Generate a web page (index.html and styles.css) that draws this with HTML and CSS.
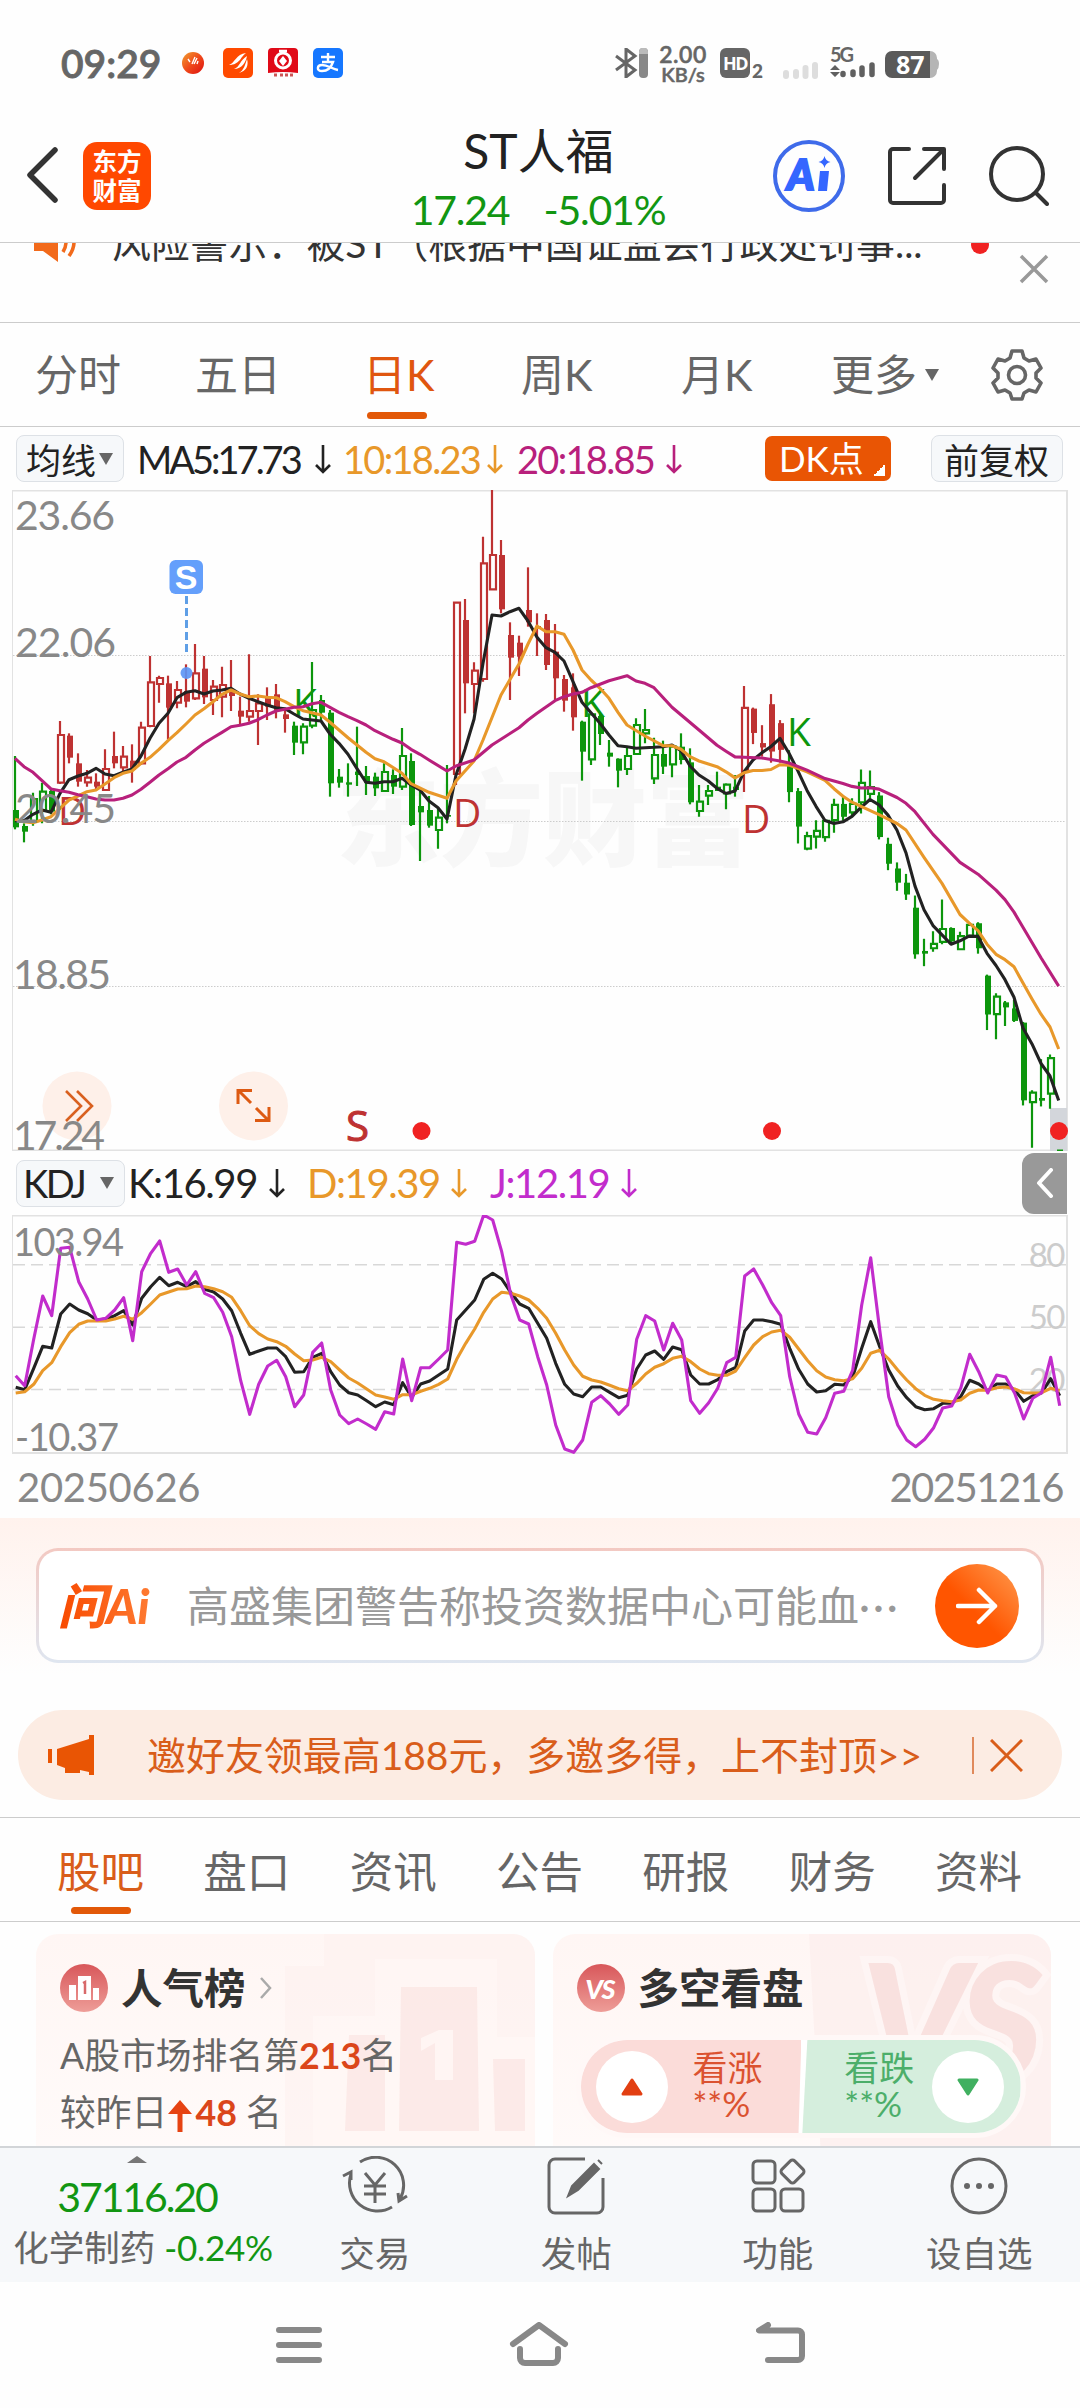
FILE: index.html
```
<!DOCTYPE html>
<html lang="zh-CN">
<head>
  <meta charset="UTF-8">
  <title>ST人福 17.24</title>
  <link rel="stylesheet" href="styles.css">
</head>
<body>

<div class="status">
  <span class="clock">09:29</span>
  <svg class="app-dot" width="22" height="22" viewBox="0 0 22 22">
    <defs><linearGradient id="ball" x1="0" y1="0" x2="1" y2="1"><stop offset="0" stop-color="#f0a030"/><stop offset=".5" stop-color="#f04a1a"/><stop offset="1" stop-color="#dd1010"/></linearGradient></defs>
    <circle cx="11" cy="11" r="11" fill="url(#ball)"/>
    <path d="M6 7l2 3M10 12l3-7M12 12l3-6M15 12l1-3" stroke="#fff" stroke-width="1.4" fill="none"/>
  </svg>
  <svg class="app-ico first" width="30" height="30" viewBox="0 0 30 30">
    <rect width="30" height="30" rx="5" fill="#ff4a00"/>
    <path d="M6 17c6-2 7-11 17-12-5 3-6 12-17 12zM11 21c6-2 6-9 13-13-1 6-5 13-13 13zM16 25c5-3 6-8 8-14 2 7-1 12-8 14z" fill="#fff"/>
  </svg>
  <svg class="app-ico" width="30" height="30" viewBox="0 0 30 30">
    <path d="M4 0h22a4 4 0 0 1 4 4v21q-15-2-30 0V4a4 4 0 0 1 4-4z" fill="#e00a18"/>
    <circle cx="15" cy="12.500" r="7.500" fill="none" stroke="#fff" stroke-width="3"/>
    <path d="M11 3h8M15 3v3" stroke="#fff" stroke-width="2.500"/><path d="M15 8l4 5-4 5-4-5z" fill="#fff"/>
    <path d="M6 27h3M12 27h3M17 27h3M22 27h3" stroke="#c55" stroke-width="3"/>
  </svg>
  <svg class="app-ico" width="30" height="30" viewBox="0 0 30 30">
    <rect width="30" height="30" rx="5" fill="#1677ff"/>
    <path d="M8 9h14M15 5v9M9 14h11c-2 6-6 9-11 9-6 0-5-6 0-6 6 0 10 4 16 5" fill="none" stroke="#fff" stroke-width="2.400"/>
  </svg>
  <svg class="bt" width="34" height="30" viewBox="0 0 34 30">
    <path d="M1 8l19 14-9 7V1l9 7L1 22" fill="none" stroke="#666" stroke-width="3"/>
    <rect x="24" width="9" height="30" rx="4" fill="#888"/><path d="M24 6V4a4 4 0 0 1 9 0v2z" fill="#bbb"/>
  </svg>
  <div class="speed"><span>2.00</span><span>KB/s</span></div>
  <div class="hd">HD</div><span class="hd-sub">2</span>
  <svg class="sig1" width="36" height="18" viewBox="0 0 36 18" stroke="#ddd" stroke-width="6" stroke-linecap="round">
    <path d="M3 12v3M13 11v4M22.500 7v8M32 4v11"/>
  </svg>
  <svg class="sig2" width="46" height="32" viewBox="0 0 46 32">
    <text x="0" y="15" class="g5" textLength="24">5G</text>
    <path d="M13 26.500v1M23 25v2.500M32 21v6.500M42 18v9.500" stroke="#606060" stroke-width="5.500" stroke-linecap="round"/>
    <path d="M0 23l5-5 5 5zM0 25l5 5 5-5z" fill="#606060"/>
  </svg>
  <svg class="battery" width="55" height="28" viewBox="0 0 55 28">
    <path d="M44 0h1a7 7 0 0 1 7 7v1q2 1 2 5t-2 6v1a7 7 0 0 1-7 7h-1z" fill="#b5b5b5"/>
    <path d="M7 0h38v27H7a7 7 0 0 1-7-7V7a7 7 0 0 1 7-7z" fill="#5a5a5a"/>
    <text x="11" y="22.500" class="pct">87</text>
  </svg>
</div>

<header class="header">
  <div class="left">
    <svg width="32" height="56" viewBox="0 0 32 56"><path d="M29 3L4 28l25 25" fill="none" stroke="#333" stroke-width="5.500" stroke-linecap="round" stroke-linejoin="round"/></svg>
    <div class="logo">东方<br>财富</div>
  </div>
  <div class="title">
    <h1>ST人福</h1>
    <div class="quote"><span>17.24</span><span>-5.01%</span></div>
  </div>
  <div class="right">
    <svg width="72" height="72" viewBox="0 0 72 72">
      <circle cx="36" cy="36" r="34" fill="none" stroke="#3f6bea" stroke-width="4"/>
      <text x="14" y="50" class="ai-text">A</text>
      <path d="M47 31h9l-2 20h-9z" fill="#3466ff"/>
      <path d="M51.500 16q1 5 6 6-5 1-6 6-1-5-6-6 5-1 6-6z" fill="#3466ff"/>
    </svg>
    <svg width="58" height="58" viewBox="0 0 58 58" fill="none" stroke="#333" stroke-width="4" stroke-linecap="round" stroke-linejoin="round">
      <path d="M21 2H5a3 3 0 0 0-3 3v48a3 3 0 0 0 3 3h48a3 3 0 0 0 3-3V38M36 2h20v20M54 4L27 31"/>
    </svg>
    <svg width="60" height="60" viewBox="0 0 60 60" fill="none" stroke="#333" stroke-width="4" stroke-linecap="round">
      <circle cx="28" cy="28" r="26"/><path d="M47 47l11 11"/>
    </svg>
  </div>
</header>

<div class="ticker">
  <svg class="horn" width="44" height="38" viewBox="0 0 44 38">
    <path d="M0 12h9L24 0v38L9 27H0z" fill="#f26a1b"/>
    <path d="M29 9q6 9 0 19M35 4q10 14 0 28" fill="none" stroke="#f26a1b" stroke-width="3.500"/>
  </svg>
  <span class="ticker-text">风险警示：被ST（根据中国证监会行政处罚事...</span>
  <i class="red-dot"></i>
  <svg class="close" width="30" height="30" viewBox="0 0 30 30"><path d="M2 2l26 26M28 2L2 28" stroke="#999" stroke-width="3.500"/></svg>
</div>

<nav class="periods">
  <span>分时</span><span>五日</span><span class="active">日K</span><span>周K</span><span>月K</span><span class="more">更多<i class="tri"></i></span>
  <svg width="52" height="52" viewBox="0 0 52 52" fill="none" stroke="#666" stroke-width="3.600" stroke-linejoin="round">
    <path d="M21 2h10l2 7 5 3 7-2 5 9-5 5v5l5 5-5 9-7-2-5 3-2 6H21l-2-6-5-3-7 2-5-9 5-5v-5l-5-5 5-9 7 2 5-3z"/>
    <circle cx="26" cy="26" r="8.500"/>
  </svg>
</nav>

<div class="ma-row">
  <span class="chip ma-chip">均线<i class="tri"></i></span>
  <span class="ma v5">MA5:17.73</span><svg class="down v5" viewBox="0 0 16 30"><path d="M8 1v27M1 21l7 7 7-7"/></svg>
  <span class="ma v10">10:18.23</span><svg class="down v10" viewBox="0 0 16 30"><path d="M8 1v27M1 21l7 7 7-7"/></svg>
  <span class="ma v20">20:18.85</span><svg class="down v20" viewBox="0 0 16 30"><path d="M8 1v27M1 21l7 7 7-7"/></svg>
  <span class="dk">DK点</span>
  <span class="chip fq">前复权</span>
</div>

<svg class="price" width="1080" height="661" viewBox="0 0 1080 661">
  <text x="336" y="368" class="watermark" textLength="414">东方财富</text>
  <g class="frame">
    <path d="M12 .5H1068M12 660.500H1068" stroke-width="2"/>
    <path d="M12.500 0V661" stroke-width="1"/><path d="M1067 0V661" stroke-width="2"/>
  </g>
  <path class="dots" d="M13 165.500H1066M13 331.500H1066M13 496.500H1066"/>
  <rect x="1050" y="618" width="17" height="43" fill="#d3d6db"/>
  <path d="M1057 660.500h6" stroke="#0c960c" stroke-width="2"/>
  <circle cx="77" cy="616" r="34.500" fill="#fef0e9"/>
  <path d="M66 601l15 15-15 15M77 601l15 15-15 15" fill="none" stroke="#d9601f" stroke-width="2.600"/>
  <circle cx="253.500" cy="616" r="34.500" fill="#fef0e9"/>
  <path d="M251 613l-12-12M238 614v-13.500h14M256 618l12 12M255 630.500h14V617" fill="none" stroke="#dd5a12" stroke-width="3"/>
  <g id="candles"></g>
  <g id="marks">
    <text x="58" y="335" class="mark red">D</text>
    <text x="453" y="337" class="mark red">D</text>
    <text x="742" y="343" class="mark red">D</text>
    <text x="293" y="227" class="mark green">K</text>
    <text x="581" y="227" class="mark green">K</text>
    <text x="787" y="256" class="mark green">K</text>
    <text x="346" y="651" class="mark red s">S</text>
  </g>
  <g id="averages"></g>
  <path d="M186.500 106v56" stroke="#5f9fe6" stroke-width="3" stroke-dasharray="8 4"/>
  <circle cx="186.500" cy="183" r="6" fill="#5b93f5" opacity=".9"/>
  <rect x="169.500" y="70" width="33.500" height="34" rx="6" fill="#649ffb"/>
  <text x="186" y="99" class="s-box">S</text>
  <g fill="#f02222"><circle cx="421.500" cy="641" r="9"/><circle cx="772" cy="641" r="9"/><circle cx="1059" cy="641" r="9"/></g>
  <g class="axis">
    <text x="15" y="39.500" textLength="100">23.66</text>
    <text x="15" y="167" textLength="101">22.06</text>
    <text x="15" y="332.500" textLength="101">20.45</text>
    <text x="13" y="498.500" textLength="98">18.85</text>
    <text x="13" y="659.500" textLength="92">17.24</text>
  </g>
</svg>

<div class="kdj-row">
  <span class="chip kdj-chip">KDJ<i class="tri"></i></span>
  <span class="kdj k">K:16.99</span><svg class="down v5" viewBox="0 0 16 30"><path d="M8 1v27M1 21l7 7 7-7"/></svg>
  <span class="kdj d">D:19.39</span><svg class="down v10" viewBox="0 0 16 30"><path d="M8 1v27M1 21l7 7 7-7"/></svg>
  <span class="kdj j">J:12.19</span><svg class="down vj" viewBox="0 0 16 30"><path d="M8 1v27M1 21l7 7 7-7"/></svg>
  <span class="collapse"><svg width="18" height="30" viewBox="0 0 18 30"><path d="M15 2L3 15l12 13" fill="none" stroke="#fff" stroke-width="4" stroke-linecap="round" stroke-linejoin="round"/></svg></span>
</div>

<svg class="kdj-chart" width="1080" height="239" viewBox="0 0 1080 239">
  <g class="frame">
    <path d="M12 .5H1068M12 238H1068" stroke-width="2"/>
    <path d="M12.500 0V239" stroke-width="1"/><path d="M1067 0V239" stroke-width="2"/>
  </g>
  <path class="dashes" d="M13 49.700H1066M13 112.300H1066M13 174.500H1066"/>
  <g class="level" text-anchor="end"><text x="1064" y="51.500">80</text><text x="1064" y="114">50</text><text x="1064" y="176.500">20</text></g>
  <g id="kdj"></g>
  <g class="axis small">
    <text x="13" y="41" textLength="111">103.94</text>
    <text x="15" y="236" textLength="104">-10.37</text>
  </g>
</svg>
<div class="dates"><span>20250626</span><span class="to">20251216</span></div>

<div class="ask">
  <div class="ask-box">
    <span class="ask-logo">问Ai</span>
    <span class="ask-text">高盛集团警告称投资数据中心可能血<span class="dots3">···</span></span>
    <span class="go"><svg width="42" height="38" viewBox="0 0 42 38"><path d="M2 19h37M23 3l16 16-16 16" fill="none" stroke="#fff" stroke-width="4.500" stroke-linecap="round" stroke-linejoin="round"/></svg></span>
  </div>
</div>

<div class="promo">
  <div class="promo-bar">
    <svg width="46" height="40" viewBox="0 0 46 40" fill="#e95504"><path d="M0 14h4v14H0zM9 14L41 4V0h5v40h-5v-3l-9-2v3H17v-5L9 30z"/></svg>
    <span class="promo-text">邀好友领最高188元，多邀多得，上不封顶&gt;&gt;</span>
    <i class="sep"></i>
    <svg class="x" width="33" height="33" viewBox="0 0 33 33"><path d="M1 1l31 31M32 1L1 32" stroke="#d95d1a" stroke-width="3"/></svg>
  </div>
</div>

<nav class="sections">
  <span class="active">股吧</span><span>盘口</span><span>资讯</span><span>公告</span><span>研报</span><span>财务</span><span>资料</span>
</nav>

<div class="cards">
  <div class="card rank">
    <svg class="card-bg" width="250" height="224" viewBox="0 0 250 224">
      <path d="M39 0h211v224H0V32h39z" fill="#fdf0ee" opacity=".5"/>
      <path d="M90 25h122v78h38v121H28V82h62z" fill="#fff8f7" opacity=".6"/>
      <path d="M116 53h76l2 144h-80zM64 101h36v96H60zM208 125h32v72h-30z" fill="#fae3e0" opacity=".65"/>
      <path d="M168 96v50h-18v-37l-14 8v-13l18-8z" fill="#fff5f3"/>
    </svg>
    <div class="card-head">
      <svg width="48" height="48" viewBox="0 0 48 48"><defs><linearGradient id="badge" x1="0" y1="0" x2="0" y2="1"><stop offset="0" stop-color="#d8575a"/><stop offset="1" stop-color="#ee9d98"/></linearGradient></defs><circle cx="24" cy="24" r="24" fill="url(#badge)"/><path d="M9 21h7v15H9zM18 12h13v24H18zM33 24h6v12h-6z" fill="#fff"/><path d="M23 19l2-1v12" stroke="#d8696a" stroke-width="2.500" fill="none"/></svg>
      <h2>人气榜</h2>
      <svg class="chev" width="14" height="24" viewBox="0 0 14 24"><path d="M2 2l9 10-9 10" fill="none" stroke="#aaa" stroke-width="2.500"/></svg>
    </div>
    <p>A股市场排名第<b>213</b>名</p>
    <p class="p2">较昨日<svg width="26" height="34" viewBox="0 0 26 34"><path d="M13 1L25 15H15.500V33h-5V15H1z" fill="#e64312"/></svg><b>48</b> 名</p>
  </div>
  <div class="card vs">
    <svg class="card-bg" width="250" height="224" viewBox="0 0 250 224">
      <path d="M8 0h242v224H20z" fill="#fdefed" opacity=".8"/>
      <text x="60" y="148" class="vs-bg">VS</text>
    </svg>
    <div class="card-head">
      <svg width="48" height="48" viewBox="0 0 48 48"><circle cx="24" cy="24" r="24" fill="url(#badge)"/><text x="23" y="35" class="vs-ico">VS</text></svg>
      <h2>多空看盘</h2>
    </div>
    <div class="vote">
      <div class="up"><i><svg width="22" height="18" viewBox="0 0 22 18"><path d="M11 2L20 16H2z" fill="#e23f12" stroke="#e23f12" stroke-width="3" stroke-linejoin="round"/></svg></i><span>看涨<br>**%</span></div>
      <div class="fall"><span>看跌<br>**%</span><i><svg width="22" height="18" viewBox="0 0 22 18"><path d="M11 16L20 2H2z" fill="#40b060" stroke="#40b060" stroke-width="3" stroke-linejoin="round"/></svg></i></div>
    </div>
  </div>
</div>

<div class="toolbar">
  <div class="index">
    <i class="caret"></i>
    <span class="num">37116.20</span>
    <span class="sector">化学制药 <em>-0.24%</em></span>
  </div>
  <div class="tool">
    <svg width="66" height="60" viewBox="0 0 66 60">
      <path d="M18 6A28 28 0 0 1 58 43M50 51A28 28 0 0 1 9 18M1 20l8-4v8M65 40l-8 5-1-8"/><path d="M23 17l10 12 10-12M33 29v18M22 30h22M22 38h22"/>
    </svg>交易
  </div>
  <div class="tool">
    <svg width="60" height="60" viewBox="0 0 60 60">
      <path d="M39 3H9a6 6 0 0 0-6 6v42a6 6 0 0 0 6 6h42a6 6 0 0 0 6-6V22"/><path d="M22 40l4-10L48 8l5 5-21 21zM52 4l4 4" fill="#666" stroke-width="2"/>
    </svg>发帖
  </div>
  <div class="tool">
    <svg width="60" height="60" viewBox="0 0 60 60">
      <rect x="5" y="5" width="22" height="22" rx="4"/><rect x="5" y="33" width="22" height="22" rx="4"/><rect x="33" y="33" width="22" height="22" rx="4"/><rect x="35.500" y="6.500" width="18" height="18" rx="3" transform="rotate(45 44.500 15.500)"/>
    </svg>功能
  </div>
  <div class="tool">
    <svg width="60" height="60" viewBox="0 0 60 60">
      <circle cx="30" cy="30" r="27"/><g fill="#666" stroke="none"><circle cx="18" cy="30" r="3"/><circle cx="30" cy="30" r="3"/><circle cx="42" cy="30" r="3"/></g>
    </svg>设自选
  </div>
</div>

<div class="sysnav">
  <svg width="46" height="46" viewBox="0 0 46 46"><path d="M3 8h40M3 23h40M3 38h40"/></svg>
  <svg width="60" height="46" viewBox="0 0 60 46"><path d="M4 22L30 3l26 19M11 27v9a5 5 0 0 0 5 5h28a5 5 0 0 0 5-5v-9"/></svg>
  <svg width="50" height="46" viewBox="0 0 50 46"><path d="M12 3L3 8.500h39a4 4 0 0 1 4 4V34a4 4 0 0 1-4 4H12"/></svg>
</div>

<script src="chart.js"></script>
</body>
</html>
```

FILE: styles.css
```
* {
  box-sizing: border-box;
}

body {
  margin: 0;
  width: 1080px;
  height: 2408px;
  overflow: hidden;
  background: #fefefe;
  color: #333;
  font-family: Lato, "Noto Sans CJK SC", sans-serif;
}

svg {
  display: block;
  flex-shrink: 0;
}

h1, h2, p {
  margin: 0;
  font-weight: normal;
}

/* status bar */
.status {
  display: flex;
  align-items: center;
  height: 96px;
  padding: 30px 0 0 61px;
  color: #666;
}

.clock {
  width: 121px;
  font-size: 39px;
  line-height: 40px;
  font-weight: 600;
  letter-spacing: 0;
  -webkit-text-stroke: 0.800px #666;
}

.app-ico {
  margin-left: 15px;
}

.app-ico.first {
  margin-left: 19px;
}

.bt {
  margin-left: 272px;
}

.speed {
  display: flex;
  flex-direction: column;
  align-items: center;
  width: 50px;
  margin: 1px 0 0 9px;
  font-size: 20px;
  line-height: 20px;
  font-weight: 600;
  -webkit-text-stroke: 0.500px #666;
}

.speed span:first-child {
  font-size: 23px;
  letter-spacing: 0.500px;
}

.hd {
  width: 30px;
  height: 30px;
  margin-left: 12px;
  border-radius: 6px;
  background: #666;
  color: #fff;
  text-align: center;
  font: bold 18px/30px "Open Sans", sans-serif;
  letter-spacing: -1.500px;
}

.hd-sub {
  width: 12px;
  margin: 16px 0 0 2px;
  font-size: 19px;
  line-height: 16px;
  font-weight: 900;
}

.sig1 {
  margin: 14px 0 0 19px;
}

.sig2 {
  margin-left: 11px;
}

.g5 {
  font-size: 20px;
  font-weight: bold;
  fill: #666;
}

.battery {
  margin: 3px 0 0 9px;
}

.pct {
  font: bold 25px "Open Sans", sans-serif;
  fill: #fff;
}

/* header */
.header {
  display: grid;
  grid-template-columns: 1fr auto 1fr;
  height: 147px;
  border-bottom: 1px solid #ccc;
}

.header .left {
  display: flex;
  align-items: flex-start;
  padding: 46px 0 0 26px;
}

.header .left svg {
  margin-top: 5px;
}

.logo {
  width: 68px;
  height: 68px;
  margin-left: 25px;
  padding-top: 4px;
  border-radius: 14px;
  background: #ff4800;
  color: #fff;
  text-align: center;
  font: bold 24.500px/29px "Noto Sans CJK SC", sans-serif;
}

.title {
  text-align: center;
}

.title h1 {
  margin: 28px 0 0 -3px;
  font-size: 48px;
  line-height: 54px;
  color: #222;
}

.quote {
  display: flex;
  justify-content: center;
  gap: 34px;
  margin: 9px 0 0 -4px;
  font-size: 41px;
  line-height: 46px;
  letter-spacing: -1.200px;
  color: #129612;
}

.header .right {
  display: flex;
  justify-content: flex-end;
  align-items: center;
  gap: 43px;
  padding: 13px 31px 0 0;
}

.ai-text {
  font: italic 900 42px Lato, sans-serif;
  fill: #3466ff;
  stroke: #3466ff;
  stroke-width: 2;
}

/* scrolling risk notice, halfway through its slide */
.ticker {
  display: flex;
  align-items: flex-start;
  height: 80px;
  overflow: hidden;
  border-bottom: 1px solid #ccc;
}

.horn {
  margin: -19px 0 0 34px;
}

.ticker-text {
  width: 838px;
  margin: -26px 0 0 34px;
  font-size: 38.900px;
  line-height: 52px;
  white-space: nowrap;
}

.red-dot {
  width: 18px;
  height: 18px;
  margin: -7px 0 0 21px;
  border-radius: 50%;
  background: #f02222;
}

.close {
  margin: 11px 0 0 30px;
}

/* period tabs */
.periods {
  display: flex;
  align-items: center;
  height: 104px;
  padding-left: 35px;
  border-bottom: 1px solid #ccc;
  font-size: 43px;
  line-height: 102px;
  color: #666;
}

.periods span {
  width: 160px;
  white-space: nowrap;
}

.periods .active {
  display: flex;
  flex-direction: column;
  width: 68px;
  margin: 0 90px 0 8px;
}

.periods span:nth-child(5) {
  width: 150px;
}

.periods .more {
  display: flex;
  align-items: center;
  width: 160px;
}

.active {
  color: #e0560f;
}

.active::after {
  content: "";
  width: 60px;
  height: 7px;
  margin: -14px 0 7px 4px;
  border-radius: 4px;
  background: #e25808;
}

.tri {
  width: 0;
  height: 0;
  border: 7.500px solid transparent;
  border-top: 12px solid #666;
  border-bottom: 0;
}

.more .tri {
  margin-left: 8px;
}

/* indicator rows */
.chip {
  display: flex;
  align-items: center;
  height: 47px;
  border: 1px solid #dde1e6;
  border-radius: 8px;
  background: #f6f8fa;
  color: #222;
  white-space: nowrap;
}

.ma-row,
.kdj-row {
  display: flex;
  align-items: center;
  height: 63px;
  padding-left: 16px;
  white-space: nowrap;
}

.ma-chip {
  width: 108px;
  padding-left: 9px;
  font-size: 35px;
}

.ma-chip .tri {
  margin-left: 3px;
}

.ma {
  font-size: 38px;
  letter-spacing: -1.700px;
}

.down {
  width: 16px;
  height: 30px;
  fill: none;
  stroke: currentColor;
  stroke-width: 2.600;
}

.v5 { color: #222; }
.v10 { color: #e8982a; }
.v20 { color: #b8207c; }
.vj { color: #c22ccc; }

.ma.v5 { width: 178px; margin-left: 13px; letter-spacing: -3px; }
.ma.v10 { width: 144px; margin-left: 12px; }
.ma.v20 { width: 149px; margin-left: 14px; }

.dk {
  width: 126px;
  height: 45px;
  margin-left: 83px;
  padding-left: 14px;
  border-radius: 7px;
  background: linear-gradient(135deg, transparent 50%, #fff 50%) 108px 28px / 12px 12px no-repeat, #e95504;
  color: #fff;
  font-size: 35px;
  line-height: 44px;
}

.fq {
  width: 132px;
  margin-left: 40px;
  padding-left: 12px;
  font-size: 35px;
}

.kdj-row {
  height: 64px;
}

.kdj-chip {
  width: 109px;
  padding-left: 6px;
  font-size: 38px;
  letter-spacing: -2.500px;
}

.kdj-chip .tri {
  margin-left: 16px;
}

.kdj {
  font-size: 40px;
  letter-spacing: -1.400px;
}

.kdj.k { width: 141px; margin-left: 3px; color: #222; }
.kdj.d { width: 144px; margin-left: 22px; color: #e8982a; }
.kdj.j { width: 131px; margin-left: 23px; color: #c22ccc; }

.collapse {
  display: flex;
  align-items: center;
  justify-content: center;
  width: 45px;
  height: 61px;
  margin-left: 385px;
  border-radius: 12px 0 0 12px;
  background: #999;
}

/* charts */
.frame {
  fill: none;
  stroke: #e2e2e2;
}

.dots {
  fill: none;
  stroke: #ccc;
  stroke-dasharray: 1.500 1.500;
}

.dashes {
  fill: none;
  stroke: #d8d8d8;
  stroke-width: 1.500;
  stroke-dasharray: 12 6;
}

.axis {
  font-size: 41px;
  fill: #888;
}

.axis.small {
  font-size: 38px;
}

.level {
  font-size: 33px;
  letter-spacing: -1.500px;
  fill: #ccc;
}

.watermark {
  font: 900 104px "Noto Sans CJK SC", sans-serif;
  fill: #f7f7f7;
}

.mark {
  font: 39px "Open Sans", sans-serif;
}

.mark.s {
  font-size: 42px;
  stroke: #be3232;
}

.red { fill: #be3232; }
.green { fill: #0c960c; }

.s-box {
  font: bold 34px "Liberation Sans", sans-serif;
  fill: #fff;
  text-anchor: middle;
}

.line {
  fill: none;
  stroke: currentColor;
  stroke-width: 3.100;
  stroke-linejoin: round;
}

.dates {
  display: flex;
  justify-content: space-between;
  height: 64px;
  padding: 0 17px;
  font-size: 40px;
  line-height: 66px;
  letter-spacing: -0.300px;
  color: #888;
}

.dates .to {
  letter-spacing: -1.500px;
}

/* ask AI */
.ask {
  height: 174px;
  padding: 30px 36px 0;
  background: linear-gradient(#fff2ed, #fefefe 90%);
}

.ask-box {
  display: flex;
  align-items: center;
  height: 115px;
  padding-left: 19px;
  border: 3px solid transparent;
  border-radius: 22px;
  background: linear-gradient(#fff, #fff) padding-box, linear-gradient(#f3c9c2, #dfe6f0) border-box;
}

.ask-logo {
  width: 129px;
  font: italic 900 48px/56px Lato, "Noto Sans CJK SC", sans-serif;
  letter-spacing: 0;
  background: linear-gradient(90deg, #f84a00, #ff8038) 0 0 / 104px 100% no-repeat;
  background-clip: text;
  -webkit-background-clip: text;
  color: transparent;
}

.ask-text {
  display: flex;
  width: 748px;
  font-size: 42px;
  line-height: 60px;
  white-space: nowrap;
  color: #999;
}

.dots3 {
  letter-spacing: 3px;
}

.go {
  display: flex;
  align-items: center;
  justify-content: center;
  width: 84px;
  height: 84px;
  border-radius: 50%;
  background: linear-gradient(45deg, #ff5500 45%, #ff9c50);
}

.promo {
  height: 126px;
  padding: 18px 18px 0;
  border-bottom: 1px solid #ccc;
}

.promo-bar {
  display: flex;
  align-items: center;
  height: 90px;
  padding-left: 30px;
  border-radius: 45px;
  background: #fcece3;
}

.promo-text {
  width: 825px;
  margin: -4px 0 0 53px;
  font-size: 39px;
  letter-spacing: -0.050px;
  white-space: nowrap;
  color: #d95d1a;
}

.sep {
  width: 2px;
  height: 37px;
  background: #e08a5c;
}

.promo .x {
  margin-left: 16px;
}

.sections {
  display: flex;
  justify-content: space-between;
  height: 104px;
  padding: 0 58px 0 57px;
  border-bottom: 1px solid #ccc;
  font-size: 43.500px;
  line-height: 106px;
  color: #666;
}

.sections .active {
  display: flex;
  flex-direction: column;
  color: #d95d1a;
}

.sections .active::after {
  margin: -17px auto 0;
}

/* cards */
.cards {
  display: flex;
  gap: 18px;
  height: 224px;
  padding: 12px 29px 0 36px;
  overflow: hidden;
}

.card {
  position: relative;
  flex: 1;
  height: 260px;
  padding: 30px 24px;
  overflow: hidden;
  border-radius: 22px;
  background: linear-gradient(#fff6f4, #fffbfa);
}

.card-bg {
  position: absolute;
  top: 0;
  right: 0;
}

.card-head {
  position: relative;
  display: flex;
  align-items: center;
  height: 48px;
}

.card h2 {
  margin-left: 13px;
  font-size: 41.500px;
  font-weight: 600;
  line-height: 50px;
  color: #333;
}

.chev {
  margin-left: 13px;
}

.card p {
  position: relative;
  display: flex;
  align-items: center;
  margin-top: 17px;
  font-size: 35.800px;
  line-height: 54px;
  white-space: pre;
  color: #666;
}

.card .p2 {
  margin-top: 3px;
}

.p2 svg {
  margin: 6px 0 0 0;
}

.p2 b {
  margin-left: 2px;
}

.card p b {
  color: #db461a;
}

.vs-bg {
  font: italic 900 164px Lato, sans-serif;
  letter-spacing: -8px;
  fill: #f9e1df;
  stroke: #fef5f4;
  stroke-width: 14;
  paint-order: stroke;
}

.vs-ico {
  font: italic 900 27px Lato, sans-serif;
  letter-spacing: -1px;
  fill: #fff;
  text-anchor: middle;
}

.vote {
  position: relative;
  display: flex;
  width: 450px;
  margin: 23px 0 0 -1px;
  border: 5px solid #fff8f7;
  border-radius: 52px;
  overflow: hidden;
  font-size: 35px;
  line-height: 36px;
  background: #fff;
}

.vote div {
  display: flex;
  align-items: center;
  height: 93px;
}

.vote i {
  display: flex;
  align-items: center;
  justify-content: center;
  width: 72px;
  height: 72px;
  border-radius: 50%;
  background: #fff;
}

.vote span {
  margin-top: -3px;
}

.up {
  width: 223px;
  padding-left: 15px;
  background: #fbdcd9;
  color: #db5230;
  clip-path: polygon(0 0, 100% 0, 218px 100%, 0 100%);
}

.up span { margin-left: 25px; }

.fall {
  width: 220px;
  margin-left: 1px;
  padding-left: 42px;
  background: #d5eedd;
  color: #4cae6a;
  clip-path: polygon(5px 0, 100% 0, 100% 100%, 0 100%);
}

.fall i { margin-left: 18px; }

/* bottom toolbar */
.toolbar {
  display: flex;
  height: 136px;
  border-top: 2px solid #d2d5d8;
  background: #f6f8fa;
  color: #666;
}

.index {
  display: flex;
  flex-direction: column;
  align-items: center;
  width: 274px;
}

.caret {
  border: 10px solid transparent;
  border-top: 0;
  border-bottom: 7px solid #777;
  margin-top: 8px;
}

.num {
  margin-top: 11px;
  font-size: 41px;
  line-height: 46px;
  letter-spacing: -2.100px;
  color: #129612;
}

.sector {
  margin: 5px 0 0 12px;
  font-size: 35.500px;
  line-height: 44px;
  white-space: nowrap;
}

.sector em {
  font-style: normal;
  font-size: 35px;
  letter-spacing: -0.300px;
  color: #129612;
}

.tool {
  display: flex;
  flex-direction: column;
  align-items: center;
  width: 201.500px;
  padding-top: 8px;
  font-size: 35.500px;
  line-height: 76px;
}

.tool svg {
  fill: none;
  stroke: #666;
  stroke-width: 3;
}

.sysnav {
  display: flex;
  justify-content: center;
  gap: 187px;
  padding: 40px 0 0 2px;
}

.sysnav svg {
  fill: none;
  stroke: #888;
  stroke-width: 6;
  stroke-linecap: round;
  stroke-linejoin: round;
}
```

FILE: chart.js
```
const NS = "http://www.w3.org/2000/svg";
const STEP = 9;
const X0 = 15;

// high, body top, body bottom, low, kind
// R/G = hollow, r/g = filled
const parts = [
  { y: -10, k: 1 / 3, rows: [
    [828,990,1042,1048,"g"],[1030,1038,1055,1087,"g"],[938,957,1025,1037,"G"],[908,935,990,1030,"G"],
    [925,933,995,1003,"g"],[723,765,908,912,"R"],[760,767,833,850,"r"],[820,850,905,920,"r"],
    [870,893,907,920,"R"],[880,905,920,933,"r"],[808,867,930,932,"R"],[755,828,850,865,"r"],
    [798,830,862,880,"R"],[793,842,870,908,"r"],[725,743,850,855,"R"],[528,607,738,742,"R"],
    [587,594,612,668,"R"],[587,610,683,778,"r"],[603,630,668,685,"R"],[553,633,665,682,"r"],
    [492,580,655,660,"R"],[528,566,652,672,"r"],[600,620,660,705,"R"],[560,615,650,712,"R"],
    [540,630,648,693,"r"],[650,692,710,735,"r"],[523,693,710,725,"R"],[643,670,693,795,"R"],
    [622,650,680,720,"r"],[612,643,690,715,"r"],[690,703,717,758,"r"],[725,737,788,825,"g"],
    [730,740,787,823,"G"],[546,690,737,745,"G"],[645,660,698,720,"g"],[690,698,910,950,"g"],
    [867,890,908,923,"g"],[850,907,914,950,"g"],[740,875,885,918,"g"],[858,888,908,945,"g"],
    [878,890,925,948,"g"],[850,876,933,935,"G"],[868,885,920,942,"g"],[744,828,920,930,"G"],
    [820,843,1035,1038,"g"],[930,978,997,1143,"g"],[948,990,1037,1043,"g"],[985,1013,1050,1106,"G"],
    [855,1005,1010,1030,"g"],[366,368,882,915,"R"],[357,420,610,700,"r"],[547,572,612,700,"R"],
    [170,250,597,605,"R"],[30,225,328,330,"R"],[180,225,388,400,"r"],[427,465,533,660,"r"],
    [467,488,530,588,"r"],[262,390,427,440,"r"],[400,438,444,528,"r"],[402,420,555,570,"r"],
    [432,515,595,660,"r"],[585,597,662,695,"r"],[580,622,712,752,"r"],[722,725,815,902,"g"],
    [700,703,838,855,"G"],[700,708,762,795,"g"],[780,818,830,860,"g"],[835,836,872,922,"g"],
    [798,828,867,885,"G"],[715,735,822,825,"G"],[687,750,760,790,"G"],[773,825,895,912,"G"],
    [782,822,860,882,"g"],[795,800,853,892,"G"],[760,800,840,853,"g"],[805,847,967,973,"g"],
    [915,965,993,1010,"G"],[915,933,947,975,"G"],[875,920,933,933,"g"],[910,914,940,988,"G"],
    [885,920,930,950,"g"]
  ]},
  { y: 150, k: 0.338, rows: [
    [136,201,390,450,"R"],[200,203,275,308,"r"],[252,305,318,345,"r"],[160,190,330,363,"r"],
    [237,246,325,363,"r"],[326,365,450,480,"g"],[438,447,552,602,"g"],[567,580,617,622,"G"],
    [533,565,582,617,"G"],[530,535,583,597,"G"],[470,488,533,570,"G"],[460,485,523,535,"g"],
    [468,485,510,520,"G"],[383,423,480,513,"G"],[386,435,455,470,"G"],[450,460,583,590,"g"],
    [585,603,662,681,"g"],[658,676,718,742,"g"],[692,718,753,769,"g"],[756,792,930,943,"g"],
    [884,920,928,965,"g"],[862,899,912,922,"G"],[768,855,893,900,"G"],[850,852,892,900,"g"],
    [863,876,915,917,"G"],[840,843,875,880,"G"],[835,838,912,928,"g"],[990,993,1108,1154,"g"],
    [1045,1055,1107,1181,"G"],[1068,1072,1087,1142,"g"],[1065,1090,1127,1130,"g"],[1130,1132,1362,1377,"g"],
    [1332,1339,1367,1502,"G"],[1240,1355,1363,1380,"g"],[1226,1237,1342,1387,"G"]
  ]}
];

function add(parent, name, attrs) {
  const el = document.createElementNS(NS, name);
  for (const key in attrs) el.setAttribute(key, attrs[key]);
  document.getElementById(parent).appendChild(el);
}

let i = 0;
parts.forEach(part => {
  part.rows.forEach(([high, top, bottom, low, kind]) => {
    const y = v => part.y + v * part.k;
    const x = X0 + STEP * i++;
    const color = kind.toLowerCase() === "r" ? "#be3232" : "#0c960c";
    if (kind === "R" || kind === "G") {
      add("candles", "path", {
        d: `M${x} ${y(high)}V${y(top)}M${x} ${y(bottom)}V${y(low)}M${x - 2} ${y(top)}h6V${y(bottom)}h-6z`,
        fill: "none", stroke: color, "stroke-width": 2.2
      });
    } else {
      add("candles", "path", { d: `M${x} ${y(high)}V${y(low)}`, stroke: color, "stroke-width": 2.2 });
      add("candles", "rect", { x: x - 2, y: y(top), width: 6, height: y(bottom) - y(top), fill: color });
    }
  });
});

// moving averages, three stretches each
const stretches = [[0, -10, 1 / 3], [360, -10, 1 / 3], [720, 150, 0.338]];
const averages = {
  v5: [
    "45,1022 72,1022 99,1003 126,990 153,997 180,940 207,899 234,888 261,880 288,865 315,882 342,887 369,877 396,867 423,828 450,775 477,730 504,700 531,653 558,637 585,632 612,642 639,633 666,630 693,625 720,642 747,655 774,665 801,675 828,683 855,686 882,702 909,717 936,720 963,723 990,762 1017,790 1044,823 1071,866",
    "18,907 45,910 72,905 99,905 126,895 153,915 180,930 207,963 234,983 261,1017 288,885 315,808 342,718 369,550 396,405 423,408 450,395 477,385 504,423 531,472 558,503 585,517 612,543 639,605 666,667 693,698 720,730 747,765 774,797 801,800 828,805 855,803 882,802 909,800 936,795 963,812 990,858 1017,885 1044,902 1071,925",
    "18,454 45,447 72,390 99,355 126,333 153,315 180,291 207,335 234,388 261,445 288,492 315,534 342,543 369,538 396,522 423,495 450,472 477,488 504,518 531,563 558,630 585,728 612,798 639,845 693,900 720,890 747,876 774,877 801,927 828,963 855,1005 882,1057 909,1148 936,1195 963,1253 990,1290 1016,1362"
  ],
  v10: [
    "45,1018 72,1025 99,1028 126,1020 153,1010 180,985 207,960 234,948 261,935 288,930 315,912 342,893 369,880 396,873 423,850 450,832 477,808 504,782 531,758 558,732 585,705 612,686 639,665 666,643 693,630 720,642 747,650 774,648 801,652 828,653 855,665 882,680 909,692 936,698 963,705 990,727 1017,750 1044,773 1071,795",
    "18,817 45,836 72,845 126,880 153,911 207,937 261,955 288,903 342,843 369,780 423,645 477,552 504,492 531,438 558,455 585,455 612,463 639,510 666,570 693,600 720,625 747,655 774,697 801,735 855,768 909,797 936,797 963,808 990,830 1017,843 1071,860",
    "18,390 45,408 72,393 99,386 126,386 153,383 180,369 207,370 261,390 315,415 342,440 369,462 396,480 423,492 477,517 531,543 558,562 612,643 666,720 720,812 747,837 774,860 801,900 828,930 855,946 882,967 909,1015 936,1062 963,1107 990,1145 1016,1210"
  ],
  v20: [
    "45,835 72,860 99,877 126,902 153,927 180,932 207,937 234,944 261,950 288,957 315,960 342,960 369,955 396,945 423,928 450,907 477,885 504,866 531,846 558,832 585,810 612,790 639,773 666,757 693,740 720,736 747,730 774,719 801,705 828,693 855,688 882,682 909,680 936,671 963,667 990,682 1017,697 1044,710 1071,722",
    "18,735 45,752 99,778 126,789 153,808 180,823 207,840 261,873 288,858 342,840 396,795 477,743 504,720 531,700 585,662 612,650 639,642 666,637 693,623 747,602 801,587 828,603 855,610 882,623 936,682 1017,750 1071,796",
    "18,329 45,346 72,347 126,349 180,358 207,364 261,385 315,410 369,425 396,433 423,438 450,437 477,441 531,466 558,483 585,508 639,575 720,658 774,693 828,740 855,768 882,805 963,940 1016,1024"
  ]
};

for (const name in averages) {
  const points = averages[name].map((list, n) => {
    const [dx, dy, k] = stretches[n];
    return list.split(" ").map(p => {
      const [x, y] = p.split(",").map(Number);
      return (dx + x / 3).toFixed(1) + "," + (dy + y * k).toFixed(1);
    }).join(" ");
  }).join(" ");
  add("averages", "polyline", { points, class: "line " + name });
}

// KDJ
const kdj = {
  v5: [712,719,655,589,594,492,462,480,491,510,507,497,482,525,445,410,382,407,397,410,395,418,426,447,482,550,613,603,594,594,620,667,665,622,610,665,705,728,735,752,770,756,764,698,742,702,693,675,657,510,480,450,388,370,387,427,462,475,520,565,640,703,732,740,711,711,727,743,736,657,615,603,628,591,599,675,702,702,689,665,652,543,510,510,515,523,595,658,702,726,722,703,705,680,595,515,590,660,708,743,770,779,776,760,760,740,691,702,722,702,702,720,754,737,728,686,737],
  v10: [729,725,703,662,638,590,548,523,513,513,513,507,499,508,488,462,435,426,417,416,408,410,416,425,442,482,527,551,567,575,589,612,632,630,622,635,660,684,699,717,735,741,748,734,734,724,715,703,687,628,580,537,487,447,427,430,438,450,475,505,550,600,645,679,690,696,706,716,722,700,672,652,641,625,619,635,657,671,676,676,663,623,585,560,546,541,562,597,632,662,681,689,692,686,655,610,601,627,660,690,716,736,748,752,755,750,730,720,721,713,711,717,728,729,728,715,722],
  vj: [677,707,568,438,497,295,292,395,447,510,505,480,443,572,365,310,273,367,357,405,365,430,443,487,560,692,793,703,648,631,680,770,735,607,579,720,795,821,807,822,838,785,792,627,752,653,653,627,600,277,283,274,195,210,305,433,510,522,620,705,825,897,907,870,757,737,762,793,765,568,497,513,600,520,570,752,790,758,715,638,622,378,357,405,458,497,680,792,847,852,803,730,724,660,465,323,540,740,825,870,890,868,833,774,768,715,613,665,729,675,681,730,807,745,728,622,767]
};

for (const name in kdj) {
  const points = kdj[name].map((v, n) => (X0 + 0.7 + STEP * n) + "," + (v / 3 - 65).toFixed(1)).join(" ");
  add("kdj", "polyline", { points, class: "line " + name });
}
```
